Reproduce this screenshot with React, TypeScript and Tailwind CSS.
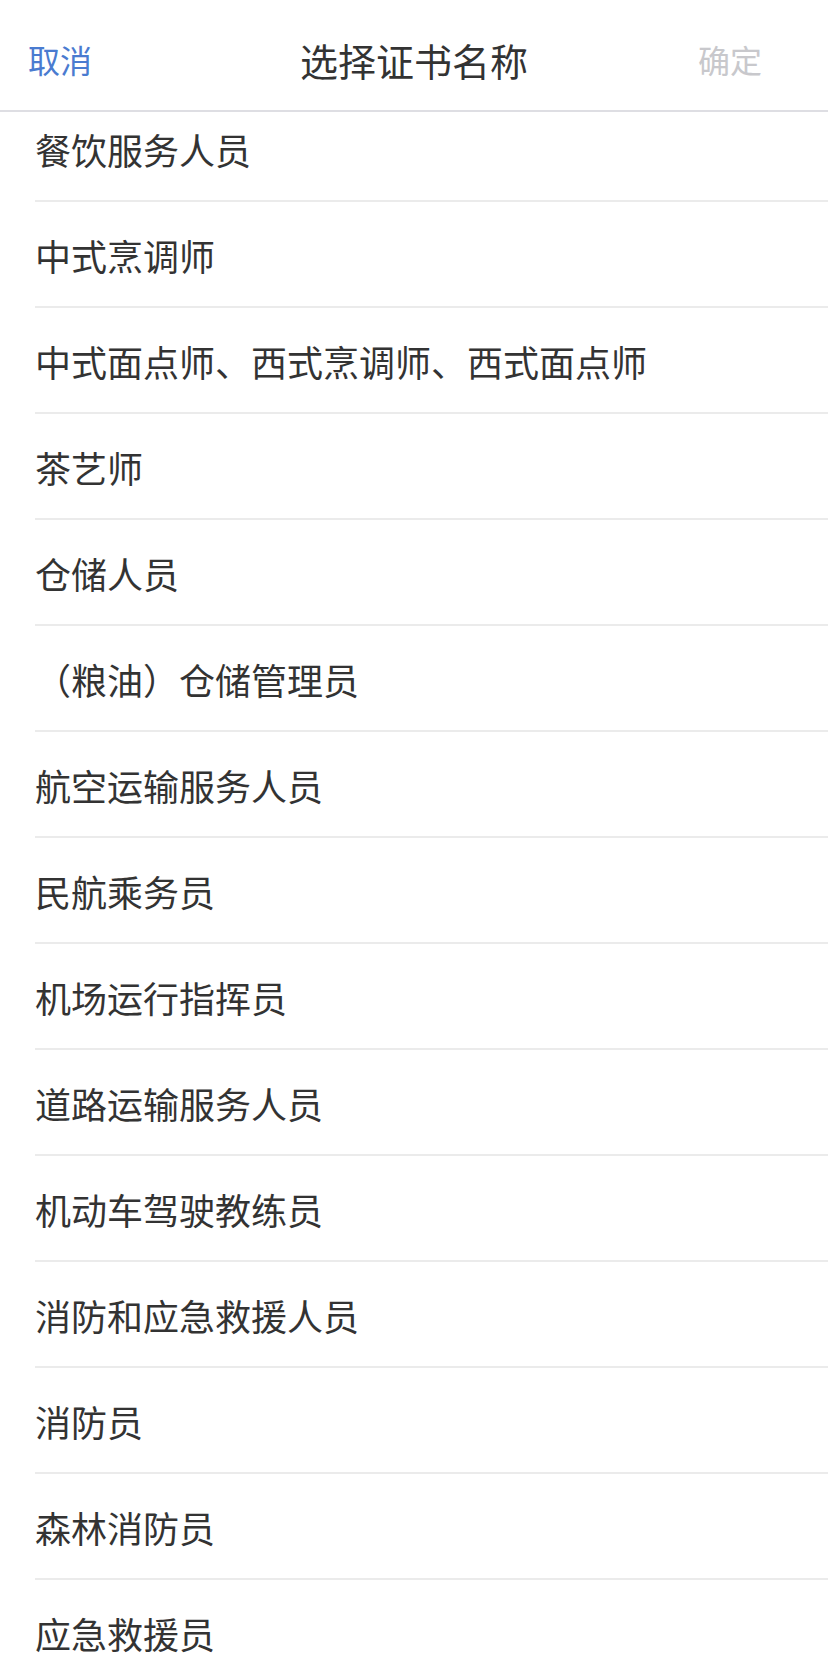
const items = [
  "餐饮服务人员",
  "中式烹调师",
  "中式面点师、西式烹调师、西式面点师",
  "茶艺师",
  "仓储人员",
  "（粮油）仓储管理员",
  "航空运输服务人员",
  "民航乘务员",
  "机场运行指挥员",
  "道路运输服务人员",
  "机动车驾驶教练员",
  "消防和应急救援人员",
  "消防员",
  "森林消防员",
  "应急救援员",
];

export default function App() {
  return (
    <div className="w-[828px] h-[1661px] overflow-hidden bg-white text-[#333333] font-['Noto_Sans_CJK_SC',sans-serif] flex flex-col">
      <div className="relative z-10 h-[112px] shrink-0 bg-white border-b-2 border-[#dedee3] grid grid-cols-[1fr_auto_1fr] items-center px-[28px] pt-[8px]">
        <span className="text-[32px] text-[#4a7bd0] justify-self-start">取消</span>
        <span className="text-[38px] text-[#333333]">选择证书名称</span>
        <span className="text-[32px] text-[#c8c8cc] justify-self-end pr-[38px]">确定</span>
      </div>
      <div className="flex-1 overflow-hidden">
        <div className="-mt-[16px]">
          {items.map((name, i) => (
            <div key={i} className="h-[106px] ml-[35px] border-b-2 border-[#ebebeb] flex items-center">
              <span className="text-[36px] leading-none pt-[2px]">{name}</span>
            </div>
          ))}
        </div>
      </div>
    </div>
  );
}
